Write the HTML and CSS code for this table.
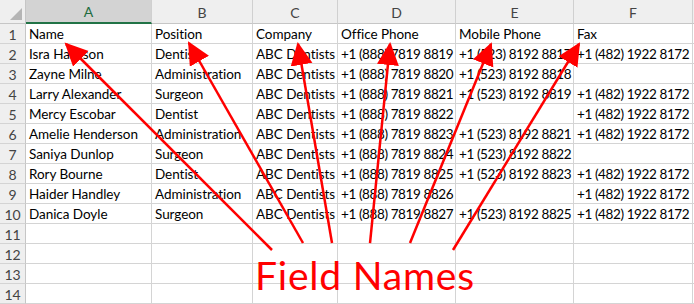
FILE: index.html
```html
<!DOCTYPE html>
<html>
<head>
<meta charset="utf-8">
<link rel="stylesheet" href="styles.css">
</head>
<body>
<div class="wrap">
<div class="sheet">
  <div class="corner"><span class="tri"></span></div>
  <div class="ch sel">A</div><div class="ch">B</div><div class="ch">C</div><div class="ch">D</div><div class="ch">E</div><div class="ch">F</div><div class="ch end"></div>

  <div class="rh">1</div><div class="c">Name</div><div class="c">Position</div><div class="c">Company</div><div class="c">Office Phone</div><div class="c">Mobile Phone</div><div class="c">Fax</div><div class="c end"></div>
  <div class="rh">2</div><div class="c">Isra Harrison</div><div class="c">Dentist</div><div class="c">ABC Dentists</div><div class="c n">+1 (888) 7819 8819</div><div class="c n">+1 (523) 8192 8817</div><div class="c n">+1 (482) 1922 8172</div><div class="c end"></div>
  <div class="rh">3</div><div class="c">Zayne Milne</div><div class="c">Administration</div><div class="c">ABC Dentists</div><div class="c n">+1 (888) 7819 8820</div><div class="c n">+1 (523) 8192 8818</div><div class="c"></div><div class="c end"></div>
  <div class="rh">4</div><div class="c">Larry Alexander</div><div class="c">Surgeon</div><div class="c">ABC Dentists</div><div class="c n">+1 (888) 7819 8821</div><div class="c n">+1 (523) 8192 8819</div><div class="c n">+1 (482) 1922 8172</div><div class="c end"></div>
  <div class="rh">5</div><div class="c">Mercy Escobar</div><div class="c">Dentist</div><div class="c">ABC Dentists</div><div class="c n">+1 (888) 7819 8822</div><div class="c"></div><div class="c n">+1 (482) 1922 8172</div><div class="c end"></div>
  <div class="rh">6</div><div class="c">Amelie Henderson</div><div class="c">Administration</div><div class="c">ABC Dentists</div><div class="c n">+1 (888) 7819 8823</div><div class="c n">+1 (523) 8192 8821</div><div class="c n">+1 (482) 1922 8172</div><div class="c end"></div>
  <div class="rh">7</div><div class="c">Saniya Dunlop</div><div class="c">Surgeon</div><div class="c">ABC Dentists</div><div class="c n">+1 (888) 7819 8824</div><div class="c n">+1 (523) 8192 8822</div><div class="c"></div><div class="c end"></div>
  <div class="rh">8</div><div class="c">Rory Bourne</div><div class="c">Dentist</div><div class="c">ABC Dentists</div><div class="c n">+1 (888) 7819 8825</div><div class="c n">+1 (523) 8192 8823</div><div class="c n">+1 (482) 1922 8172</div><div class="c end"></div>
  <div class="rh">9</div><div class="c">Haider Handley</div><div class="c">Administration</div><div class="c">ABC Dentists</div><div class="c n">+1 (888) 7819 8826</div><div class="c"></div><div class="c n">+1 (482) 1922 8172</div><div class="c end"></div>
  <div class="rh">10</div><div class="c">Danica Doyle</div><div class="c">Surgeon</div><div class="c">ABC Dentists</div><div class="c n">+1 (888) 7819 8827</div><div class="c n">+1 (523) 8192 8825</div><div class="c n">+1 (482) 1922 8172</div><div class="c end"></div>
  <div class="rh">11</div><div class="c"></div><div class="c"></div><div class="c"></div><div class="c"></div><div class="c"></div><div class="c"></div><div class="c end"></div>
  <div class="rh">12</div><div class="c"></div><div class="c"></div><div class="c"></div><div class="c"></div><div class="c"></div><div class="c"></div><div class="c end"></div>
  <div class="rh">13</div><div class="c"></div><div class="c"></div><div class="c"></div><div class="c"></div><div class="c"></div><div class="c"></div><div class="c end"></div>
  <div class="rh">14</div><div class="c"></div><div class="c"></div><div class="c"></div><div class="c"></div><div class="c"></div><div class="c"></div><div class="c end"></div>
</div>
<svg class="overlay" width="694" height="304" viewBox="0 0 694 304">
  <defs>
    <marker id="ah" markerUnits="userSpaceOnUse" markerWidth="24" markerHeight="24" refX="21" refY="11" orient="auto">
      <path d="M0,0 L23,11 L0,22 Z" fill="#ff0000"/>
    </marker>
  </defs>
  <g stroke="#ff0000" stroke-width="2.5" fill="none" marker-end="url(#ah)">
    <line x1="272" y1="250" x2="66" y2="44"/>
    <line x1="303" y1="243" x2="189" y2="43"/>
    <line x1="332" y1="243" x2="298" y2="44"/>
    <line x1="370" y1="243" x2="390" y2="44"/>
    <line x1="410" y1="243" x2="491" y2="44"/>
    <line x1="453" y1="250" x2="579" y2="44"/>
  </g>
  <text class="label" x="255" y="290">Field Names</text>
</svg>
</div>
</body>
</html>
```

FILE: styles.css
```css
html, body {
  margin: 0;
  padding: 0;
  background: #ffffff;
}
.wrap {
  position: relative;
  width: 694px;
  height: 304px;
  overflow: hidden;
}
.sheet {
  display: grid;
  grid-template-columns: 26px 126px 101px 85px 118px 118px 119px 1px;
  grid-template-rows: 24px;
  grid-auto-rows: 20px;
  font-family: Lato, "Liberation Sans", sans-serif;
  font-size: 13.5px;
  letter-spacing: -0.05px;
  color: #000;
}
.sheet > div {
  box-sizing: border-box;
  overflow: hidden;
  white-space: nowrap;
}
.corner {
  background: #efefef;
  border-right: 1px solid #c6c6c6;
  border-bottom: 1px solid #c6c6c6;
  position: relative;
}
.tri {
  position: absolute;
  right: 3px;
  bottom: 3px;
  width: 0;
  height: 0;
  border-left: 12px solid transparent;
  border-bottom: 12px solid #b5b5b5;
}
.ch {
  background: #efefef;
  border-right: 1px solid #d0d0d0;
  border-bottom: 1px solid #c6c6c6;
  text-align: center;
  line-height: 23px;
  padding-top: 1px;
  font-size: 14px;
  letter-spacing: 0;
  color: #444;
}
.ch.sel {
  background: #d3d3d3;
  color: #1e6b40;
  border-bottom: 2px solid #217346;
  line-height: 21px;
}
.ch.end {
  border-right: none;
}
.rh {
  background: #efefef;
  border-right: 1px solid #c6c6c6;
  border-bottom: 1px solid #d4d4d4;
  text-align: center;
  font-size: 14px;
  letter-spacing: 0;
  color: #444;
  line-height: 19px;
  padding-top: 1px;
}
.c {
  border-right: 1px solid #d4d4d4;
  border-bottom: 1px solid #d4d4d4;
  padding: 1px 0 0 3px;
  line-height: 18px;
}
.c.n {
  letter-spacing: -0.4px;
}
.c.end {
  border-right: none;
  padding: 0;
}
.overlay {
  position: absolute;
  left: 0;
  top: 0;
}
.label {
  font-family: Lato, "Liberation Sans", sans-serif;
  font-size: 39px;
  letter-spacing: 0.8px;
  fill: #ff0000;
}
```
